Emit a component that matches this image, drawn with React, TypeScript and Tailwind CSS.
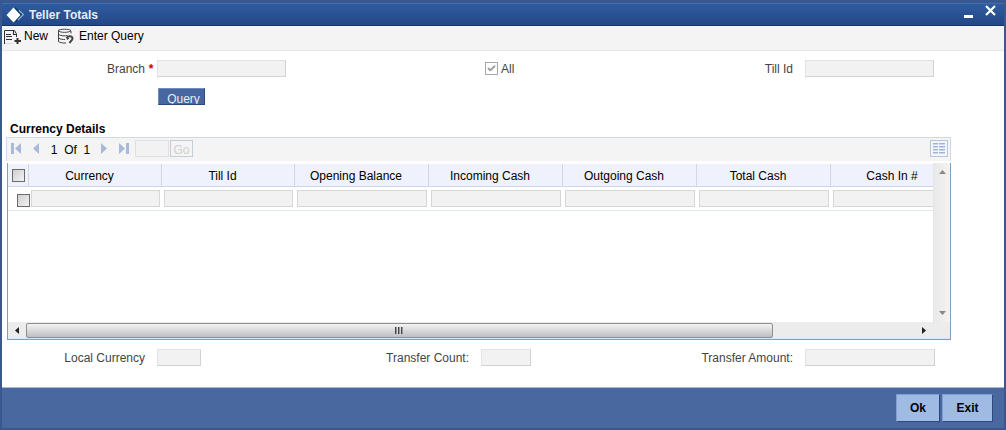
import { Check } from "lucide-react";
import type { ReactNode } from "react";

const columns = [
  "Currency",
  "Till Id",
  "Opening Balance",
  "Incoming Cash",
  "Outgoing Cash",
  "Total Cash",
  "Cash In #",
];

type FieldProps = {
  id: string;
  label: string;
  width: string;
  required?: boolean;
};

function Field({ id, label, width, required }: FieldProps) {
  return (
    <div className="flex items-center">
      <label htmlFor={id} className="flex w-[155px] justify-end text-[#444]">
        {label}
        <span className="w-3 text-center font-bold text-[#c00]">{required ? "*" : ""}</span>
      </label>
      <input
        id={id}
        readOnly
        className={`h-[17px] border border-[#e2e2e2] border-r-[#d2d2d2] border-b-[#d2d2d2] bg-[#f2f2f2] px-1 outline-none ${width}`}
      />
    </div>
  );
}

function RowCheckbox({ label }: { label: string }) {
  return (
    <input
      type="checkbox"
      aria-label={label}
      className="block size-[13px] shrink-0 appearance-none border border-[#6b6b6b] bg-linear-to-br from-[#cfcfcf] to-[#f3f3f3]"
    />
  );
}

function NavButton({ label, children }: { label: string; children: ReactNode }) {
  return (
    <button aria-label={label} className="text-[#a9b9da]">
      <svg width="11" height="12" viewBox="0 0 11 12" fill="currentColor">
        {children}
      </svg>
    </button>
  );
}

function TitleBar() {
  return (
    <header className="flex h-[23px] items-center border-t border-b border-t-[#3f6db0] border-b-[#18315f] bg-linear-to-b from-[#2f5c9f] to-[#234787] pr-2 pl-1 text-white">
      <svg width="18" height="16" viewBox="0 0 18 16" className="mr-[5px]">
        <path d="M9 0 17.500 7.500 10 15Z" fill="#0a3a70" />
        <path d="M13 3.500 17.500 7.500 12 13" fill="none" stroke="#8fb8dc" strokeWidth="1.200" />
        <path d="M7.500 .5 14.500 8 7.500 15.500 .5 8Z" fill="#fff" />
      </svg>
      <h1 className="flex-1 font-bold text-[#e6ecf5]">Teller Totals</h1>
      <button aria-label="Minimize" className="mr-3">
        <svg width="9" height="12" viewBox="0 0 9 12">
          <path d="M0 6h9v3H0z" fill="#fff" />
        </svg>
      </button>
      <button aria-label="Close" className="mb-2">
        <svg width="11" height="11" viewBox="0 0 11 11">
          <path d="M1 1 10 10M10 1 1 10" stroke="#fff" strokeWidth="2.2" />
        </svg>
      </button>
    </header>
  );
}

function Toolbar() {
  return (
    <div className="flex h-[25px] border-b border-[#e8e8e8] bg-[#f4f4f4] pt-0.5 pl-0.5">
      <button className="flex h-4 items-center gap-[3px]">
        <svg width="17" height="15" viewBox="0 0 17 15" fill="none" stroke="#333">
          <path d="M.5 15V1.500H10.500L12.500 5V8" />
          <path d="M9.500 1V5.500H13" strokeWidth="1.200" />
          <path d="M2 5.500H7M2 7.500H8M2 10.500H8" />
          <path d="M13.500 9V15M10.500 12H17" strokeWidth="2" />
          <path d="M1 14.500H9" stroke="#ddd" />
        </svg>
        New
      </button>
      <button className="ml-[9px] flex h-4 items-center gap-[5px]">
        <svg width="17" height="16" viewBox="0 0 17 16" fill="none" stroke="#444">
          <path d="M1 2.500C3 .8 12 .8 14 2.500 12 5 3 5 1 2.500Z" />
          <path d="M1.500 3V13.500M14 3V5.500M1.500 6.500C4 8 8 8.200 10.500 7.500M1.500 10C3.500 11.500 6 11.500 8 11.500M1.500 13.500C3.500 15 6 15 9 15" />
          <path d="M10 10C10.500 7.500 15.500 7.500 15.500 10.500 15.500 12.500 13.500 13 12.500 15" strokeWidth="2" />
          <path d="M9 9 10 12 12.500 10.500Z" fill="#444" stroke="none" />
        </svg>
        Enter Query
      </button>
    </div>
  );
}

function Pager() {
  return (
    <div className="mr-[53px] ml-1 flex h-6 border-t border-r border-l border-[#d3d9e8] bg-[#f4f4f4] pt-0.5 pr-0.5 pl-1">
      <div className="flex h-[17px] items-center">
        <NavButton label="First page">
          <path d="M0 0h3v11H0zM10 0v11L4 5.500z" />
        </NavButton>
        <span className="w-2" />
        <NavButton label="Previous page">
          <path d="M9 0v11L3 5.500z" />
        </NavButton>
        <span className="w-[59px] pt-0.5 text-center">1&nbsp; Of&nbsp; 1</span>
        <NavButton label="Next page">
          <path d="M1 0v11L7 5.500z" />
        </NavButton>
        <span className="w-2" />
        <NavButton label="Last page">
          <path d="M0 0v11L6 5.500zM7 0h3v11H7z" />
        </NavButton>
        <input
          aria-label="Page number"
          readOnly
          className="ml-[5px] h-[17px] w-[34px] border border-[#e0e0e0] bg-[#f2f2f2] outline-none"
        />
        <button className="ml-px h-[17px] w-[23px] border border-[#c4ccd6] text-[#d0d0d0]">
          <span className="block pt-0.5 leading-[15px]">Go</span>
        </button>
      </div>
      <button
        aria-label="Single record view"
        className="ml-auto flex h-[17px] w-[18px] items-center justify-center border border-[#b9c6d8] bg-[#f4f6fb]"
      >
        <svg width="12" height="11" viewBox="0 0 12 11">
          <path d="M0 .5h5M6 .5h6M0 3.500h5M6 3.500h6M0 6.500h5M6 6.500h6M0 9.500h5M6 9.500h6" stroke="#9fb3d6" />
          <path d="M0 1.500h5M6 1.500h6M0 4.500h5M6 4.500h6M0 7.500h5M6 7.500h6M0 10.500h5M6 10.500h6" stroke="#cdd8ec" />
        </svg>
      </button>
    </div>
  );
}

function CurrencyTable() {
  return (
    <div className="mt-0.5 mr-[53px] ml-[5px] border-r border-b border-l border-[#7ba0c4]">
      <div className="flex h-[159px]">
        <div className="min-w-0 flex-1 overflow-hidden pt-px">
          <table className="w-[956px] table-fixed border-collapse">
            <colgroup>
              <col className="w-[21px]" />
              <col className="w-[133px]" />
              <col className="w-[133px]" />
              <col span={5} className="w-[134px]" />
            </colgroup>
            <thead>
              <tr className="h-[23px] bg-[#eff2fc] shadow-[inset_0_-1px_0_#cfd6e8]">
                <th className="p-0 pl-1 shadow-[inset_-1px_0_0_#cfd6e8]">
                  <RowCheckbox label="Select all rows" />
                </th>
                {columns.map((name) => (
                  <th
                    key={name}
                    className="p-0 pr-3 text-center font-normal shadow-[inset_-1px_0_0_#cfd6e8]"
                  >
                    {name}
                  </th>
                ))}
              </tr>
            </thead>
            <tbody>
              <tr className="h-6 shadow-[inset_0_-1px_0_#dfe5f0]">
                <td className="p-0 pt-[3px] pl-[9px]">
                  <RowCheckbox label="Select row" />
                </td>
                {columns.map((name) => (
                  <td key={name} className="p-0 pr-0.5 pb-0.5 pl-0.5">
                    <input
                      aria-label={name}
                      readOnly
                      className="block h-[17px] w-full border border-[#d6d6d6] bg-[#f2f2f2] px-1 outline-none"
                    />
                  </td>
                ))}
              </tr>
            </tbody>
          </table>
        </div>
        <div className="flex w-[17px] flex-col items-center justify-between border-l border-[#e6e6e6] bg-linear-to-r from-[#e9e9e9] to-[#f3f3f3] py-[7px]">
          <svg width="7" height="4" viewBox="0 0 7 4">
            <path d="M0 4 3.500 0 7 4z" fill="#888" />
          </svg>
          <svg width="7" height="4" viewBox="0 0 7 4">
            <path d="M0 0h7L3.500 4z" fill="#888" />
          </svg>
        </div>
      </div>
      <div className="flex h-[17px] border-b border-[#dbe8f5] bg-[#ececec]">
        <div className="flex w-[18px] items-center justify-center">
          <svg width="4" height="7" viewBox="0 0 4 7">
            <path d="M4 0v7L0 3.500z" fill="#222" />
          </svg>
        </div>
        <div className="flex flex-1 items-center">
          <div className="flex h-[15px] w-[84%] items-center justify-center rounded-[2px] border border-[#8f8f8f] bg-linear-to-b from-[#f3f3f3] via-[#d9d9db] to-[#bfbfc3]">
            <svg width="9" height="7" viewBox="0 0 9 7">
              <path d="M.5 0v7M3.500 0v7M6.500 0v7" stroke="#444" />
              <path d="M1.500 0v7M4.500 0v7M7.500 0v7" stroke="#999" />
            </svg>
          </div>
        </div>
        <div className="mr-[17px] flex w-[18px] items-center justify-center">
          <svg width="4" height="7" viewBox="0 0 4 7">
            <path d="M0 0v7L4 3.500z" fill="#222" />
          </svg>
        </div>
      </div>
    </div>
  );
}

export default function App() {
  return (
    <div className="w-full border-2 border-t-3 border-[#39588f] bg-white font-['Liberation_Sans',Arial,sans-serif] text-[12px] leading-4 text-black">
      <TitleBar />
      <Toolbar />

      <main>
        <div className="mr-[30px] grid grid-cols-3 pt-[9px]">
          <Field id="branch" label="Branch" width="w-[129px]" required />
          <label className="ml-[159px] flex items-center gap-[3px] text-[#444]">
            <span className="relative size-[13px]">
              <input
                type="checkbox"
                defaultChecked
                className="block size-[13px] appearance-none border border-[#a8a8a8] bg-white"
              />
              <Check size={9} strokeWidth={5} className="absolute top-0.5 left-0.5 text-[#9c9c9c]" />
            </span>
            All
          </label>
          <Field id="till" label="Till Id" width="w-[129px]" />
        </div>
        <button className="mt-[11px] ml-[156px] block h-[17px] w-[47px] overflow-hidden border border-[#6f8fc0] border-r-[#2b4a7c] border-b-[#2b4a7c] bg-[#4766a0] text-[#e8edf6]">
          <span className="block pt-0.5 pl-1">Query</span>
        </button>

        <section>
          <h2 className="mt-4 pl-2 font-bold">Currency Details</h2>
          <Pager />
          <CurrencyTable />
        </section>

        <div className="mt-[9px] mr-[30px] mb-[21px] grid grid-cols-3">
          <Field id="local" label="Local Currency" width="w-[44px]" />
          <Field id="count" label="Transfer Count:" width="w-[50px]" />
          <Field id="amount" label="Transfer Amount:" width="w-[130px]" />
        </div>
      </main>

      <footer className="flex h-[41px] justify-end gap-0.5 border-t border-[#a9b8d3] bg-[#4a68a0] pt-1.5 pr-[11px]">
        <button className="h-7 w-11 border border-[#7f9fd0] border-r-[#2c4a7a] border-b-[#2c4a7a] bg-[#9fbae3] font-bold">
          Ok
        </button>
        <button className="h-7 w-[51px] border border-[#7f9fd0] border-r-[#2c4a7a] border-b-[#2c4a7a] bg-[#9fbae3] font-bold">
          Exit
        </button>
      </footer>
    </div>
  );
}
